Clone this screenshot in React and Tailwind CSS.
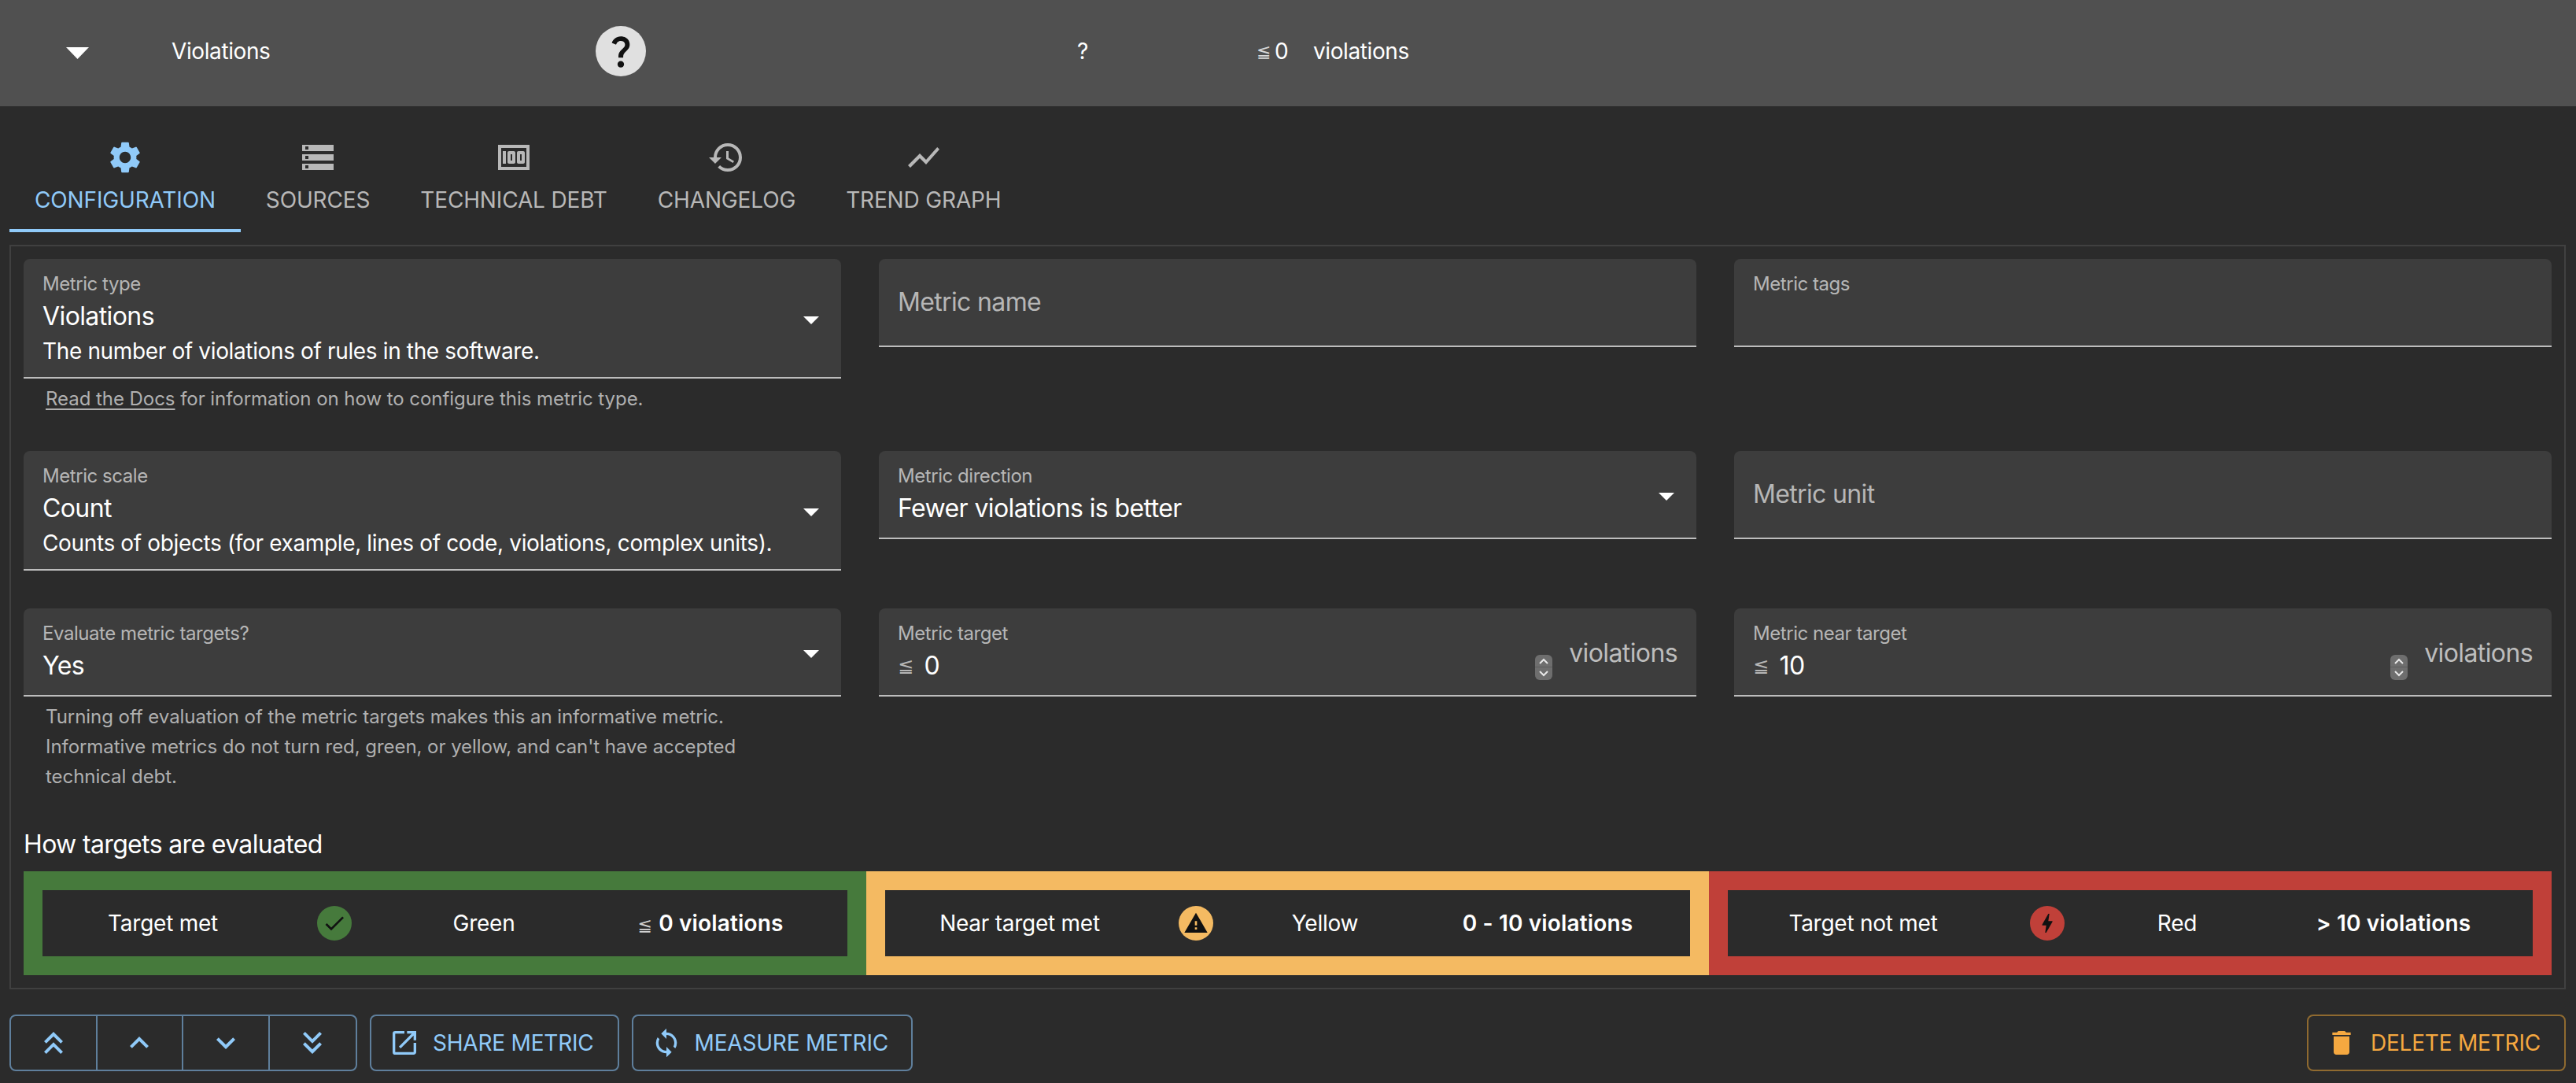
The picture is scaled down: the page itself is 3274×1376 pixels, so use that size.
import React from 'react';
import {
  MdSettings, MdStorage, MdMoney, MdHistory, MdShowChart, MdArrowDropDown, MdQuestionMark,
  MdKeyboardDoubleArrowUp, MdKeyboardArrowUp, MdKeyboardArrowDown, MdKeyboardDoubleArrowDown,
  MdOpenInNew, MdSync, MdDelete, MdCheck, MdWarning, MdBolt,
} from 'react-icons/md';

const TABS = [
  { label: 'CONFIGURATION', Icon: MdSettings, active: true },
  { label: 'SOURCES', Icon: MdStorage },
  { label: 'TECHNICAL DEBT', Icon: MdMoney },
  { label: 'CHANGELOG', Icon: MdHistory },
  { label: 'TREND GRAPH', Icon: MdShowChart },
];

const TARGETS = [
  {
    name: 'Target met', color: 'Green', Icon: MdCheck, outer: 'bg-[#467a3c]', dot: 'bg-[#467a3c]',
    cols: 'grid-cols-[306px_130px_250px_326px]', value: '0 violations', prefix: '≦',
  },
  {
    name: 'Near target met', color: 'Yellow', Icon: MdWarning, outer: 'bg-[#f4ba62]', dot: 'bg-[#f4ba62]',
    cols: 'grid-cols-[342px_106px_222px_344px]', value: '0 - 10 violations',
  },
  {
    name: 'Target not met', color: 'Red', Icon: MdBolt, outer: 'bg-[#c04039]', dot: 'bg-[#c04039]',
    cols: 'grid-cols-[344px_124px_206px_344px]', value: '> 10 violations',
  },
];

function Leq({ className }) {
  return <span className={`font-normal font-['DejaVu_Sans',sans-serif] ${className}`}>≦</span>;
}

function Field({ label, value, description, select, height = 'h-[112px]' }) {
  return (
    <div className={`relative ${height} rounded-t-lg bg-[#3d3d3d] border-b-2 border-[#bdbdbd] px-6`}>
      <div className="pt-4 text-[24px] leading-[32px] tracking-[-0.45px] text-[#b6b6b6]">{label}</div>
      {value && <div className="mt-[5px] text-[32px] leading-[40px] tracking-[-0.6px] text-white">{value}</div>}
      {description && <div className="mt-1 text-[28px] leading-[40px] tracking-[-0.36px] text-white">{description}</div>}
      {select && <MdArrowDropDown size={48} className={`absolute right-[14px] text-white ${select}`} />}
    </div>
  );
}

function Placeholder({ label }) {
  return (
    <div className="flex h-[112px] items-center rounded-t-lg bg-[#3d3d3d] border-b-2 border-[#bdbdbd] px-6 text-[32px] tracking-[-0.65px] text-[#b6b6b6]">
      {label}
    </div>
  );
}

function Spinner() {
  return (
    <div className="mt-[59px] flex h-8 w-[22px] shrink-0 flex-col rounded-md bg-[#6e6e6e]">
      <div className="flex h-4 items-center justify-center border-b border-[#5c5c5c]">
        <svg width="12" height="8" viewBox="0 0 12 8" fill="none" stroke="#e8e8e8" strokeWidth="2"><path d="M1 7l5-5 5 5" /></svg>
      </div>
      <div className="flex h-4 items-center justify-center">
        <svg width="12" height="8" viewBox="0 0 12 8" fill="none" stroke="#e8e8e8" strokeWidth="2"><path d="M1 1l5 5 5-5" /></svg>
      </div>
    </div>
  );
}

function NumberField({ label, value }) {
  return (
    <div className="flex h-[112px] rounded-t-lg bg-[#3d3d3d] border-b-2 border-[#bdbdbd] pl-6 pr-6">
      <div className="flex-1">
        <div className="pt-4 text-[24px] leading-[32px] tracking-[-0.45px] text-[#b6b6b6]">{label}</div>
        <div className="mt-[5px] flex items-center text-[32px] leading-[40px] tracking-[-0.6px] text-white">
          <Leq className="mr-[14px] text-[24px] text-[#b6b6b6]" />
          {value}
        </div>
      </div>
      <Spinner />
      <div className="ml-[21px] mt-[37px] text-[32px] leading-[40px] tracking-[-0.6px] text-[#bdbdbd]">violations</div>
    </div>
  );
}

function Helper({ children }) {
  return <div className="mt-[7px] px-7 text-[24px] leading-[38px] tracking-[-0.05px] text-[#b0b0b0]">{children}</div>;
}

function TargetBox({ name, color, Icon, outer, dot, cols, value, prefix }) {
  return (
    <div className={`p-6 ${outer}`}>
      <div className={`grid h-[84px] items-center bg-[#2b2b2b] text-center text-[28px] text-white ${cols}`}>
        <div className="tracking-[-0.25px]">{name}</div>
        <div className="flex justify-center">
          <div className={`flex h-11 w-11 items-center justify-center rounded-full text-[#111] ${dot}`}>
            <Icon size={32} />
          </div>
        </div>
        <div className="tracking-[-0.25px]">{color}</div>
        <div className="font-semibold tracking-[0.15px]">
          {prefix && <Leq className="mr-2 text-[22px] text-[#d0d0d0]" />}
          {value}
        </div>
      </div>
    </div>
  );
}

export default function App() {
  return (
    <div className="min-h-screen bg-[#2b2b2b] font-[Inter,sans-serif] text-white">
      {/* Metric row */}
      <div className="flex h-[135px] items-center bg-[#505050] pb-[5px] text-[28px] tracking-[-0.4px]">
        <div className="mt-[5px] flex w-[218px] justify-start pl-[84px]">
          <svg width="29" height="15" viewBox="0 0 29 15" fill="white"><path d="M0 0h29L14.5 15z" /></svg>
        </div>
        <div className="w-[539px]">Violations</div>
        <div className="w-[612px]">
          <div className="flex h-16 w-16 items-center justify-center rounded-full bg-[#e0e0e0] text-[#111]">
            <MdQuestionMark size={50} />
          </div>
        </div>
        <div className="w-[228px]">?</div>
        <div className="flex w-[72px] items-center">
          <Leq className="mr-[5px] text-[22px] text-[#d8d8d8]" />
          0
        </div>
        <div>violations</div>
      </div>

      <div className="pl-3 pr-[13px]">
        {/* Tabs */}
        <div className="mt-4 flex">
          {TABS.map(({ label, Icon, active }) => (
            <div
              key={label}
              className={`flex h-[144px] flex-col items-center border-b-4 px-8 pt-[25px] ${active ? 'border-[#90caf9] text-[#90caf9]' : 'border-transparent text-[#b8b8b8]'}`}
            >
              <Icon size={48} />
              <div className="mt-[10px] text-[28px] leading-[40px] tracking-[-0.15px]">{label}</div>
            </div>
          ))}
        </div>

        {/* Configuration panel */}
        <div className="mt-4 border-2 border-[#404040] p-4">
          <div className="grid grid-cols-3 gap-x-12 gap-y-12">
            <div className="h-[196px]">
              <Field
                label="Metric type"
                value="Violations"
                description="The number of violations of rules in the software."
                select="top-[53px]"
                height="h-[152px]"
              />
              <Helper>
                <span className="underline underline-offset-4">Read the Docs</span> for information on how to configure this metric type.
              </Helper>
            </div>
            <div><Placeholder label="Metric name" /></div>
            <div><Field label="Metric tags" /></div>

            <div>
              <Field
                label="Metric scale"
                value="Count"
                description="Counts of objects (for example, lines of code, violations, complex units)."
                select="top-[53px]"
                height="h-[152px]"
              />
            </div>
            <div><Field label="Metric direction" value="Fewer violations is better" select="top-[33px]" /></div>
            <div><Placeholder label="Metric unit" /></div>

            <div>
              <Field label="Evaluate metric targets?" value="Yes" select="top-[33px]" />
              <Helper>
                Turning off evaluation of the metric targets makes this an informative metric.<br />
                Informative metrics do not turn red, green, or yellow, and can't have accepted<br />
                technical debt.
              </Helper>
            </div>
            <div><NumberField label="Metric target" value="0" /></div>
            <div><NumberField label="Metric near target" value="10" /></div>
          </div>

          <div className="mt-[45px] text-[32px] leading-[44px] tracking-[-0.65px]">How targets are evaluated</div>
          <div className="mt-3 grid grid-cols-3">
            {TARGETS.map((t) => <TargetBox key={t.name} {...t} />)}
          </div>
        </div>

        {/* Actions */}
        <div className="mt-8 flex h-[72px] items-stretch text-[28px] tracking-[-0.2px] text-[#90caf9]">
          <div className="grid w-[442px] grid-cols-4 rounded-lg border-2 border-[#5f7f9c]">
            <div className="flex items-center justify-center border-r-2 border-[#5f7f9c]"><MdKeyboardDoubleArrowUp size={48} /></div>
            <div className="flex items-center justify-center border-r-2 border-[#5f7f9c]"><MdKeyboardArrowUp size={48} /></div>
            <div className="flex items-center justify-center border-r-2 border-[#5f7f9c]"><MdKeyboardArrowDown size={48} /></div>
            <div className="flex items-center justify-center"><MdKeyboardDoubleArrowDown size={48} /></div>
          </div>
          <div className="ml-4 flex items-center rounded-lg border-2 border-[#5f7f9c] pl-[22px] pr-[30px]">
            <MdOpenInNew size={40} className="mr-4" />
            SHARE METRIC
          </div>
          <div className="ml-4 flex items-center rounded-lg border-2 border-[#5f7f9c] pl-[22px] pr-[29px]">
            <MdSync size={40} className="mr-4" />
            MEASURE METRIC
          </div>
          <div className="ml-auto flex items-center rounded-lg border-2 border-[#8f6a30] pl-[22px] pr-[30px] text-[#f5a840]">
            <MdDelete size={40} className="mr-[17px]" />
            DELETE METRIC
          </div>
        </div>
      </div>
    </div>
  );
}
